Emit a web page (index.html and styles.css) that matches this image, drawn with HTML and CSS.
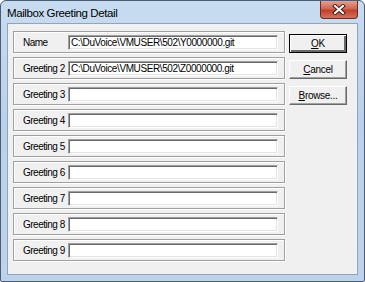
FILE: index.html
```html
<!DOCTYPE html>
<html lang="en">

<head>
    <meta charset="UTF-8">
    <title>Mailbox Greeting Detail</title>
    <link rel="stylesheet" href="styles.css">
</head>

<body>
    <div id="window">
        <div class="titlebar">
            <span class="title">Mailbox Greeting Detail</span>
            <div class="close-btn">
                <svg width="14" height="11" viewBox="0 0 14 11">
                    <path d="M3 2 L11 9 M11 2 L3 9" stroke="#3b2020" stroke-width="4" stroke-linecap="square"/>
                    <path d="M3 2 L11 9 M11 2 L3 9" stroke="#ffffff" stroke-width="2" stroke-linecap="square"/>
                </svg>
            </div>
        </div>
        <div class="client">
            <div class="rows">
                <div class="row">
                    <label>Name</label>
                    <div class="field">C:\DuVoice\VMUSER\502\Y0000000.git</div>
                </div>
                <div class="row">
                    <label>Greeting 2</label>
                    <div class="field">C:\DuVoice\VMUSER\502\Z0000000.git</div>
                </div>
                <div class="row">
                    <label>Greeting 3</label>
                    <div class="field"></div>
                </div>
                <div class="row">
                    <label>Greeting 4</label>
                    <div class="field"></div>
                </div>
                <div class="row">
                    <label>Greeting 5</label>
                    <div class="field"></div>
                </div>
                <div class="row">
                    <label>Greeting 6</label>
                    <div class="field"></div>
                </div>
                <div class="row">
                    <label>Greeting 7</label>
                    <div class="field"></div>
                </div>
                <div class="row">
                    <label>Greeting 8</label>
                    <div class="field"></div>
                </div>
                <div class="row">
                    <label>Greeting 9</label>
                    <div class="field"></div>
                </div>
            </div>
            <div class="buttons">
                <button class="default"><u>O</u>K</button>
                <button><u>C</u>ancel</button>
                <button><u>B</u>rowse...</button>
            </div>
        </div>
    </div>
</body>

</html>
```

FILE: styles.css
```css
body {
    margin: 0;
    background: #ffffff;
}

#window {
    width: 365px;
    height: 282px;
    box-sizing: border-box;
    border: 1px solid #4d5c70;
    border-radius: 6px 6px 2px 2px;
    background: linear-gradient(#c8dcf1, #b9d1ea 40%, #bdd3ec);
    display: flex;
    flex-direction: column;
}

.titlebar {
    height: 22px;
    display: flex;
    align-items: center;
    justify-content: space-between;
    padding-left: 6px;
}

.title {
    font-family: "Liberation Sans", Arial, sans-serif;
    font-size: 11.5px;
    letter-spacing: -0.4px;
    color: #000;
    margin-top: 1px;
}

.close-btn {
    align-self: flex-start;
    width: 36px;
    height: 17px;
    margin-right: 6px;
    border: 1px solid #6e2a22;
    border-top: none;
    border-radius: 0 0 4px 4px;
    background: linear-gradient(#e4a190, #d2654e 45%, #c2412a 55%, #d4735c);
    display: flex;
    align-items: center;
    justify-content: center;
}

.client {
    flex: 1;
    margin: 0 6px 6px 6px;
    border: 1px solid #8fa5bf;
    background: #f0f0f0;
    display: flex;
    gap: 4px;
    padding: 7px 0 0 5px;
    font-family: "Liberation Sans", Arial, sans-serif;
    font-size: 10px;
    letter-spacing: -0.4px;
    color: #000;
}

.rows {
    display: flex;
    flex-direction: column;
    gap: 4px;
}

.row {
    width: 272px;
    height: 22px;
    box-sizing: border-box;
    border: 1px solid #a0a0a0;
    box-shadow: inset 1px 1px #ffffff, 1px 1px #ffffff;
    display: flex;
    align-items: center;
}

.row label {
    width: 45px;
    padding-left: 9px;
    flex-shrink: 0;
    white-space: nowrap;
    letter-spacing: -0.5px;
}

.field {
    width: 210px;
    height: 15px;
    box-sizing: border-box;
    border: 1px solid;
    border-color: #a0a0a0 #ffffff #ffffff #a0a0a0;
    box-shadow: inset 1px 1px #696969, inset -1px -1px #e3e3e3;
    background: #ffffff;
    padding: 1px 0 0 2px;
    line-height: 12px;
    white-space: nowrap;
    overflow: hidden;
}

.buttons {
    display: flex;
    flex-direction: column;
    gap: 7px;
    padding-top: 3px;
}

button {
    width: 58px;
    height: 19px;
    box-sizing: border-box;
    padding: 0;
    font-family: inherit;
    font-size: 10px;
    letter-spacing: -0.3px;
    color: #000;
    background: #f0f0f0;
    border: 1px solid;
    border-color: #ffffff #696969 #696969 #ffffff;
    box-shadow: inset -1px -1px #a0a0a0;
}

button.default {
    border: 1px solid #000000;
    box-shadow: inset 1px 1px #ffffff, inset -2px -2px #696969, inset -1px -1px #a0a0a0;
}
```
